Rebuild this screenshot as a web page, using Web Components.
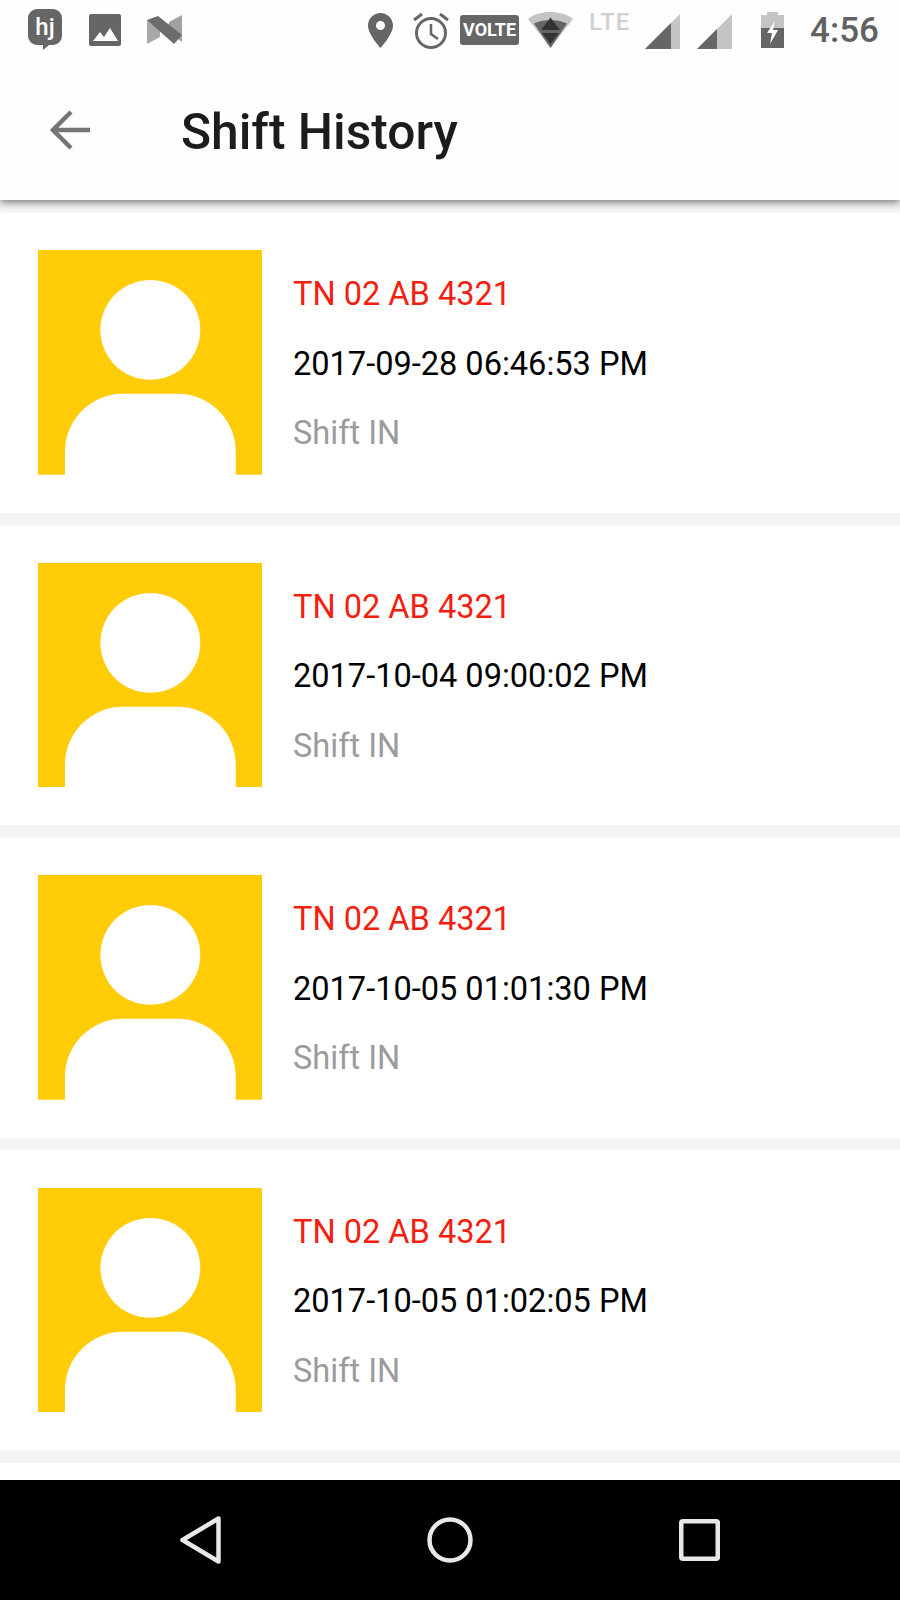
<!DOCTYPE html>
<html>
<head>
<meta charset="utf-8">
<title>Shift History</title>
<style>
  html, body { margin: 0; height: 1600px; overflow: hidden; background: #f5f3f4; font-family: Roboto, "Liberation Sans", sans-serif; }
  body { display: flex; flex-direction: column; }
</style>
</head>
<body>
<status-bar></status-bar>
<app-toolbar>Shift History</app-toolbar>
<shift-list>
  <shift-card plate="TN 02 AB 4321" time="2017-09-28 06:46:53 PM" status="Shift IN"></shift-card>
  <shift-card plate="TN 02 AB 4321" time="2017-10-04 09:00:02 PM" status="Shift IN"></shift-card>
  <shift-card plate="TN 02 AB 4321" time="2017-10-05 01:01:30 PM" status="Shift IN"></shift-card>
  <shift-card plate="TN 02 AB 4321" time="2017-10-05 01:02:05 PM" status="Shift IN"></shift-card>
  <shift-card></shift-card>
</shift-list>
<nav-bar></nav-bar>

<script>
class StatusBar extends HTMLElement {
  constructor() {
    super();
    this.attachShadow({ mode: 'open' });
  }

  connectedCallback() {
    this.shadowRoot.innerHTML = `
      <style>
        :host { display: flex; align-items: flex-start; position: relative; z-index: 3; height: 60px; background: #fefefe; color: #666; flex: none; }
        svg { display: block; flex: none; margin-top: 9px; overflow: visible; }
        .spacer { flex: 1; }
        .volte { flex: none; width: 59px; height: 30px; margin: 15px 0 0 11px; border-radius: 3px; background: #666; color: #fff;
          font: 700 18px/30px Roboto, sans-serif; text-align: center; }
        .lte { flex: none; margin: 9px 0 0 16px; color: #d0d0d0; font: 500 24px/27px Roboto, sans-serif; letter-spacing: 1px; width: 42px; white-space: nowrap; }
        .clock { flex: none; margin: 9px 21px 0 26px; font: 500 35px/43px Roboto, sans-serif; color: #616161; }
      </style>
      <svg style="margin-left:28px" width="34" height="41" viewBox="0 0 34 41">
        <path d="M9 0h16a9 9 0 0 1 9 9v18a9 9 0 0 1-9 9h-4l-6 5v-5H9a9 9 0 0 1-9-9V9a9 9 0 0 1 9-9z" fill="#666"/>
        <text x="17" y="26" text-anchor="middle" font-family="Roboto" font-size="24" font-weight="500" fill="#fff">hj</text>
      </svg>
      <svg style="margin:14px 0 0 27px" width="32" height="32" viewBox="0 0 32 32">
        <rect width="32" height="32" rx="2" fill="#666"/>
        <path d="M4 27l7-9 4 5 6-9 8 13z" fill="#fff"/>
      </svg>
      <svg style="margin:15px 0 0 26px" width="36" height="29" viewBox="0 0 36 29">
        <path d="M0 5V29L13 22V14z" fill="#a8a8a8"/>
        <path d="M22 7L35 0V27L22 17z" fill="#a0a0a0"/>
        <path d="M0 5L11 1L35 20L27 29z" fill="#6c6c6c"/>
      </svg>
      <div class="spacer"></div>
      <svg style="margin-top:13px" width="25" height="35" viewBox="0 0 25 35">
        <path fill-rule="evenodd" d="M12.5 0C5.6 0 0 5.6 0 12.5 0 21.5 12.5 35 12.5 35S25 21.5 25 12.5C25 5.6 19.4 0 12.5 0zm0 17a4.500 4.500 0 1 1 0-9 4.500 4.500 0 0 1 0 9z" fill="#666"/>
      </svg>
      <svg style="margin:13px 0 0 20px" width="36" height="36" viewBox="0 0 36 36">
        <circle cx="18" cy="20" r="14.500" fill="none" stroke="#666" stroke-width="3"/>
        <path d="M18 11v10l7 5" fill="none" stroke="#666" stroke-width="2.500"/>
        <path d="M1 7l8-6M35 7l-8-6" fill="none" stroke="#666" stroke-width="3"/>
      </svg>
      <div class="volte">VOLTE</div>
      <svg style="margin:12px 0 0 9px" width="45" height="36" viewBox="0 0 45 36">
        <path d="M0 7C6 2 14 0 22.500 0S39 2 45 7L22.500 36z" fill="#c4c4c4"/>
        <path d="M6 11.500C11 9 17 8 22.500 8S34 9 39 11.500L22.500 36z" fill="#666"/>
        <path d="M22.500 5.500L32 18H13z" fill="#333"/>
        <path d="M14 21H31L22.500 32z" fill="#333"/>
      </svg>
      <div class="lte">LTE</div>
      <svg style="margin:14px 0 0 14px" width="35" height="35" viewBox="0 0 35 35">
        <path d="M35 0V35H0z" fill="#c4c4c4"/>
        <path d="M26 9V35H0z" fill="#666"/>
      </svg>
      <svg style="margin:14px 0 0 17px" width="35" height="35" viewBox="0 0 35 35">
        <path d="M35 0V35H0z" fill="#c4c4c4"/>
        <path d="M20 15V35H0z" fill="#666"/>
      </svg>
      <svg style="margin:12px 0 0 29px" width="23" height="36" viewBox="0 0 23 36">
        <path d="M6 0h11v3h6v33H0V3h6z" fill="#c4c4c4"/>
        <path d="M0 16h23v20H0z" fill="#666"/>
        <path d="M14 9L6 21h5l-2 11 8-14h-5z" fill="#fff"/>
      </svg>
      <div class="clock">4:56</div>
    `;
  }
}

class AppToolbar extends HTMLElement {
  constructor() {
    super();
    this.attachShadow({ mode: 'open' });
  }

  connectedCallback() {
    this.shadowRoot.innerHTML = `
      <style>
        :host { display: flex; align-items: center; position: relative; z-index: 2; flex: none; height: 140px; padding-left: 50px;
          background: #fefefe; color: #1c1c1c; box-shadow: 0 3px 7px rgba(0,0,0,.45); }
        svg { flex: none; display: block; }
        .title { margin: 4px 0 0 91px; font: 500 49.700px/56px Roboto, sans-serif; }
      </style>
      <svg width="40" height="40" viewBox="0 0 40 40">
        <path d="M40 20H3M21 2L3 20l18 18" fill="none" stroke="#757575" stroke-width="4.500"/>
      </svg>
      <div class="title"><slot></slot></div>
    `;
  }
}

class ShiftList extends HTMLElement {
  constructor() {
    super();
    this.attachShadow({ mode: 'open' });
  }

  connectedCallback() {
    this.shadowRoot.innerHTML = `
      <style>
        :host { display: flex; flex-direction: column; gap: 12.500px; flex: 1; min-height: 0; overflow: hidden; padding-top: 12.500px; }
      </style>
      <slot></slot>
    `;
  }
}

class ShiftCard extends HTMLElement {
  constructor() {
    super();
    this.attachShadow({ mode: 'open' });
  }

  static get observedAttributes() {
    return ['plate', 'time', 'status'];
  }

  attributeChangedCallback(name, oldValue, newValue) {
    if (oldValue !== newValue) {
      this.render();
    }
  }

  connectedCallback() {
    this.render();
  }

  row(name) {
    const value = this.getAttribute(name);
    return value ? `<div class="${name}">${value}</div>` : '';
  }

  render() {
    this.shadowRoot.innerHTML = `
      <style>
        :host { display: flex; flex: none; align-items: center; gap: 30.600px; height: 300px; box-sizing: border-box; padding-left: 37.700px; background: #fff; font-size: 32.550px; }
        svg { display: block; flex: none; }
        .info { display: flex; flex-direction: column; margin-top: 4px; font-family: Roboto, sans-serif; line-height: 69.400px; }
        .plate { color: #f4200f; }
        .time { color: #000; }
        .status { color: #9b9b9b; }
      </style>
      <svg width="224.700" height="224.700" viewBox="0 0 225 225">
        <rect width="225" height="225" fill="#ffcc07"/>
        <circle cx="112.500" cy="80" r="50" fill="#fff"/>
        <path d="M27 227V202a58 58 0 0 1 58-58h55a58 58 0 0 1 58 58v25z" fill="#fff"/>
      </svg>
      <div class="info">${this.row('plate')}${this.row('time')}${this.row('status')}</div>
    `;
  }
}

class NavBar extends HTMLElement {
  constructor() {
    super();
    this.attachShadow({ mode: 'open' });
  }

  connectedCallback() {
    this.shadowRoot.innerHTML = `
      <style>
        :host { display: flex; align-items: center; flex: none; height: 120px; background: #000; padding-left: 180px; position: relative; z-index: 2; }
        svg { display: block; flex: none; }
      </style>
      <svg width="41" height="48" viewBox="0 0 41 48">
        <path d="M38.500 2.500V45.500L2.500 24z" fill="none" stroke="#e8e8e8" stroke-width="4.500" stroke-linejoin="round"/>
      </svg>
      <svg style="margin-left:206px" width="46" height="46" viewBox="0 0 46 46">
        <circle cx="23" cy="23" r="20.500" fill="none" stroke="#e8e8e8" stroke-width="4.500"/>
      </svg>
      <svg style="margin-left:206px" width="41" height="42" viewBox="0 0 41 42">
        <rect x="2.250" y="2.250" width="36.500" height="37.500" rx="1.500" fill="none" stroke="#e8e8e8" stroke-width="4.500"/>
      </svg>
    `;
  }
}

customElements.define('status-bar', StatusBar);
customElements.define('app-toolbar', AppToolbar);
customElements.define('shift-list', ShiftList);
customElements.define('shift-card', ShiftCard);
customElements.define('nav-bar', NavBar);
</script>
</body>
</html>
